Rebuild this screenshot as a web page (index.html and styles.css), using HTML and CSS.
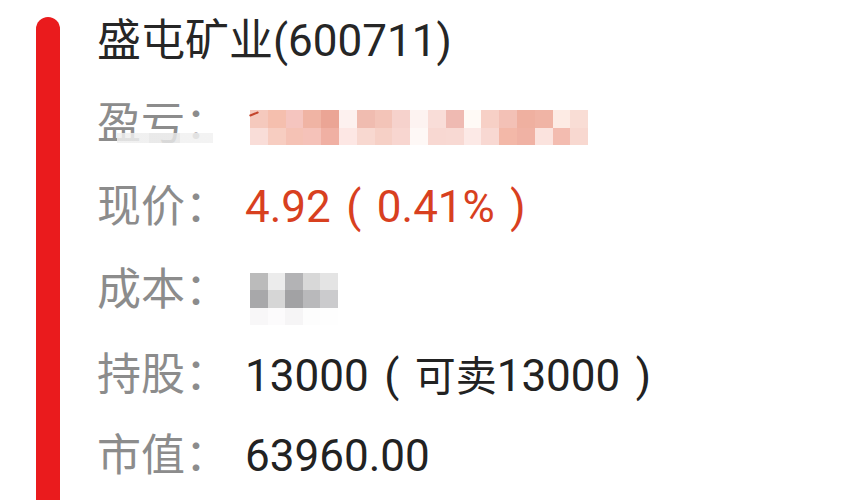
FILE: index.html
```html
<!DOCTYPE html>
<html lang="zh-CN">
<head>
<meta charset="utf-8">
<title>盛屯矿业</title>
<link rel="stylesheet" href="styles.css">
</head>
<body>
<div class="page">
  <div class="bar"></div>
  <div class="content">
    <div class="title">盛屯矿业(600711)</div>
    <div class="row">
      <div class="label">盈亏：<span class="label-mask"></span></div>
      <div class="value">
        <div class="mosaic pink">
          <i style="background:#f5c9bd"></i><i style="background:#f5bfae"></i><i style="background:#f5c5bf"></i><i style="background:#f0b4a4"></i><i style="background:#eba595"></i><i style="background:#fdf1ef"></i><i style="background:#f0bcb0"></i><i style="background:#f3c4b8"></i><i style="background:#f6d2cc"></i><i style="background:#fdf3f1"></i><i style="background:#f9ddd8"></i><i style="background:#efbab2"></i><i style="background:#fffaf6"></i><i style="background:#f7d0c6"></i><i style="background:#f3c1b6"></i><i style="background:#efb0a0"></i><i style="background:#f0b4a5"></i><i style="background:#fdebe4"></i><i style="background:#f9ddd5"></i>
          <i style="background:#f9ddd8"></i><i style="background:#f7cdc1"></i><i style="background:#f5c2b5"></i><i style="background:#f5c2b9"></i><i style="background:#f0b0a3"></i><i style="background:#fde7e4"></i><i style="background:#f8d8d0"></i><i style="background:#f6d0c6"></i><i style="background:#f8d6d0"></i><i style="background:#fef8f6"></i><i style="background:#f8d8d2"></i><i style="background:#f8d9d3"></i><i style="background:#fce9e6"></i><i style="background:#f8d8d2"></i><i style="background:#f3b8a8"></i><i style="background:#f0b2a4"></i><i style="background:#fbe3de"></i><i style="background:#f3bcb0"></i><i style="background:#f8d8d0"></i>
        </div>
        <span class="streak"></span>
      </div>
    </div>
    <div class="row">
      <div class="label">现价：</div>
      <div class="value red">4.92<span class="paren">(</span>0.41%<span class="paren">)</span></div>
    </div>
    <div class="row">
      <div class="label">成本：</div>
      <div class="value">
        <div class="mosaic gray">
          <i style="background:#bbbbbb"></i><i style="background:#ececec"></i><i style="background:#b3b3b5"></i><i style="background:#d8d8d8"></i><i style="background:#e4e4e4"></i>
          <i style="background:#a8a8aa"></i><i style="background:#d6d6d6"></i><i style="background:#a2a2a4"></i><i style="background:#b9b9bb"></i><i style="background:#cbcbcd"></i>
          <i style="background:#f8f7f8"></i><i style="background:#fcfbfc"></i><i style="background:#f6f5f6"></i><i style="background:#fdfdfd"></i><i style="background:#fefefe"></i>
        </div>
      </div>
    </div>
    <div class="row">
      <div class="label">持股：</div>
      <div class="value">13000<span class="paren">(</span><span class="cjk">可卖</span>13000<span class="paren">)</span></div>
    </div>
    <div class="row">
      <div class="label">市值：</div>
      <div class="value">63960.00</div>
    </div>
  </div>
</div>
</body>
</html>
```

FILE: styles.css
```css
html, body {
  margin: 0;
  padding: 0;
  background: #ffffff;
  overflow: hidden;
}
.page {
  display: flex;
  width: 848px;
  height: 500px;
  overflow: hidden;
  font-family: Roboto, "Noto Sans CJK SC", sans-serif;
  font-size: 44px;
  color: #222222;
}
.bar {
  flex: 0 0 24px;
  margin-left: 36px;
  margin-top: 17px;
  background: #ea1b1d;
  border-radius: 12px 12px 0 0;
}
.content {
  padding-left: 37px;
  display: flex;
  flex-direction: column;
}
.title {
  height: 83px;
  line-height: 83px;
  color: #262626;
}
.row {
  height: 83px;
  display: grid;
  grid-template-columns: 148px 1fr;
  align-items: center;
}
.label {
  position: relative;
  color: #8c8c8c;
  line-height: 83px;
  white-space: nowrap;
}
.label-mask {
  position: absolute;
  left: 20px;
  top: 50px;
  width: 96px;
  height: 10px;
  background: linear-gradient(90deg, #eeeeee 0 33%, #e6e6e6 33% 66%, #f1f1f1 66%);
  opacity: 0.85;
}
.value {
  position: relative;
  line-height: 83px;
  white-space: nowrap;
}
.paren {
  display: inline-block;
  width: 46px;
  text-align: center;
}
.cjk {
  font-family: "Noto Sans CJK SC", sans-serif;
  font-size: 41px;
}
.red {
  color: #d8401f;
}
.mosaic {
  display: grid;
}
.mosaic i {
  display: block;
}
.pink {
  grid-template-columns: repeat(19, 17.8px);
  grid-auto-rows: 17.5px;
  margin-left: 5px;
  margin-top: 6px;
}
.streak {
  position: absolute;
  left: 4px;
  top: 9px;
  width: 10px;
  height: 2px;
  background: #c4452c;
  transform: rotate(-22deg);
  border-radius: 1px;
}
.gray {
  grid-template-columns: repeat(5, 17.6px);
  grid-auto-rows: 17.5px;
  margin-left: 5px;
  margin-top: 17px;
}
```
